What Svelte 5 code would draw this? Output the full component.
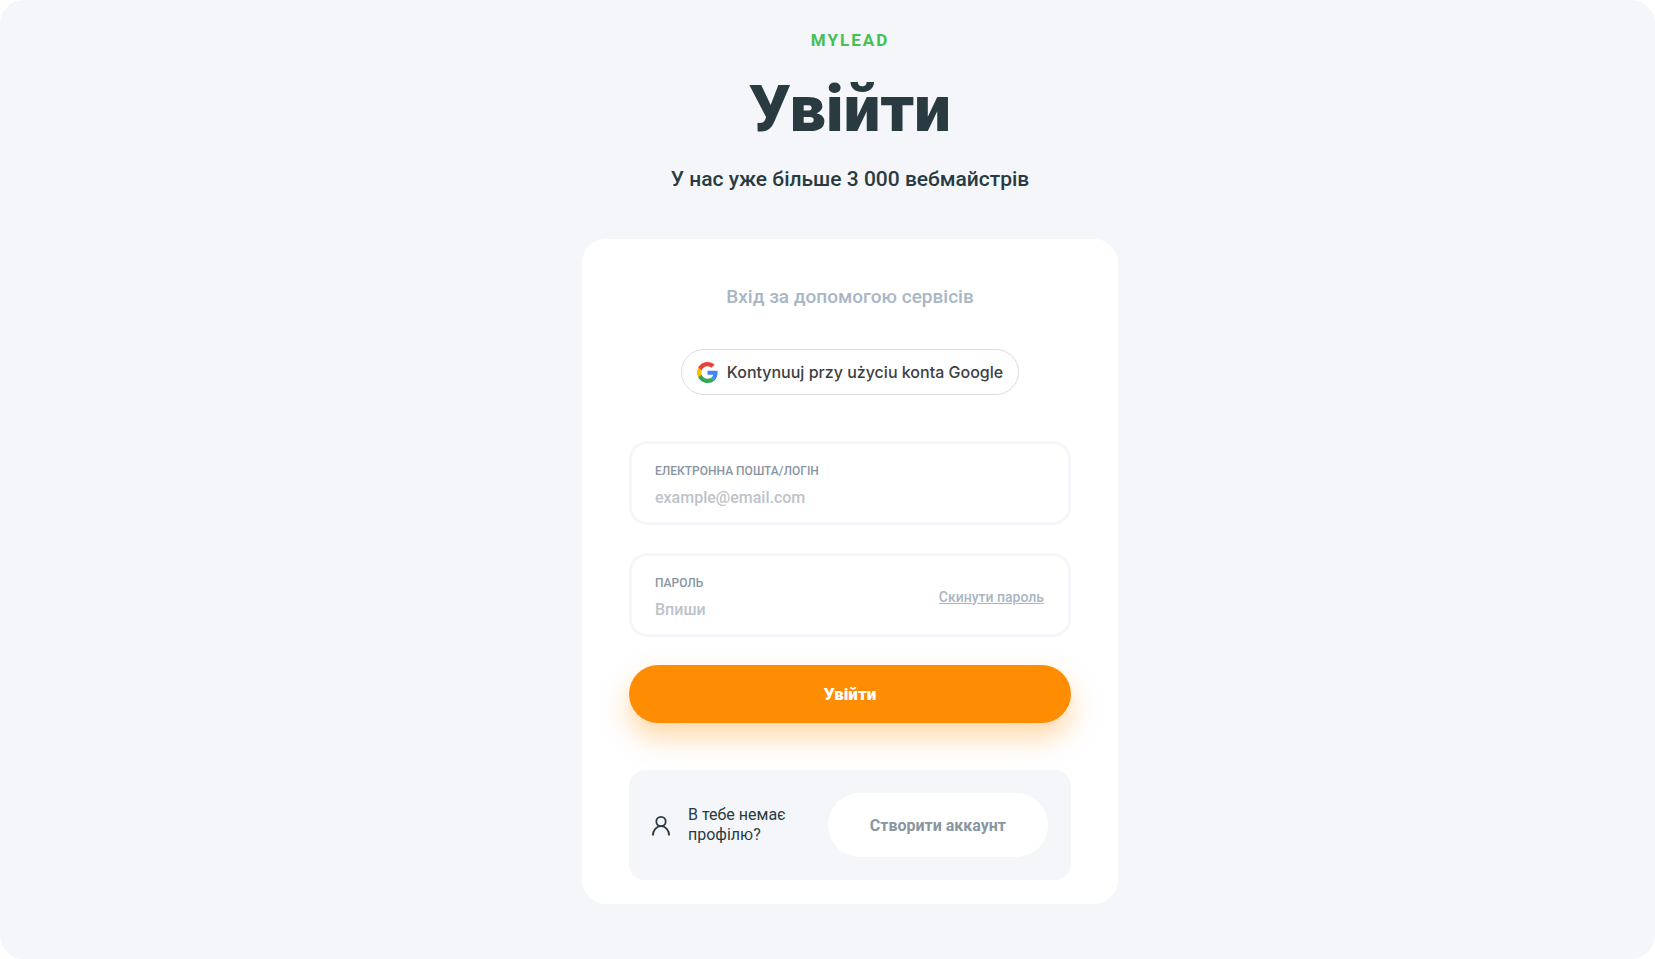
<script>
  let login = $state("");
  let password = $state("");

  function submit(event) {
    event.preventDefault();
  }
</script>

<style>
  :global(body) {
    margin: 0;
    background: #fff;
  }

  .page {
    box-sizing: border-box;
    min-height: 100vh;
    padding: 28px 0 55px 45px;
    border-radius: 24px;
    background: #f4f6fa;
    color: #293b41;
    font-family: Roboto, "Liberation Sans", sans-serif;
    display: flex;
    flex-direction: column;
    align-items: center;
  }

  header {
    text-align: center;
  }

  .brand {
    margin: 0;
    font-size: 17px;
    line-height: 24px;
    font-weight: 700;
    letter-spacing: 2px;
    color: #46bf55;
  }

  h1 {
    margin: 17px 0 16px;
    font-size: 65px;
    line-height: 80px;
    font-weight: 900;
  }

  .subtitle {
    margin: 0;
    font-size: 21px;
    line-height: 28px;
    font-weight: 500;
  }

  .card {
    box-sizing: border-box;
    width: 100%;
    max-width: 536px;
    margin-top: 46px;
    padding: 46px 47px 24px;
    border-radius: 24px;
    background: #fff;
  }

  .services {
    display: flex;
    flex-direction: column;
    align-items: center;
    gap: 40px;
    margin-bottom: 46px;
  }

  .services p {
    margin: 0;
    font-size: 19px;
    line-height: 24px;
    font-weight: 500;
    color: #a9b6c4;
  }

  button {
    cursor: pointer;
    font-family: inherit;
  }

  .google {
    display: flex;
    align-items: center;
    gap: 9px;
    height: 46px;
    padding: 0 15px;
    border: 1px solid #dadce0;
    border-radius: 23px;
    background: #fff;
    color: #3c4043;
    font-family: Inter, sans-serif;
    font-size: 16px;
    font-weight: 500;
  }

  .google svg {
    width: 21px;
    height: 21px;
  }

  form {
    display: flex;
    flex-direction: column;
    gap: 28px;
  }

  .field {
    display: flex;
    align-items: center;
    justify-content: space-between;
    gap: 16px;
    padding: 15px 24px 12px 23px;
    border: 3px solid #f4f6fa;
    border-radius: 18px;
  }

  .entry {
    flex: 1;
    min-width: 0;
    display: flex;
    flex-direction: column;
    gap: 3px;
  }

  label {
    font-size: 12px;
    line-height: 24px;
    font-weight: 500;
    text-transform: uppercase;
    color: #8995a1;
  }

  input {
    width: 100%;
    height: 24px;
    padding: 0;
    border: 0;
    outline: 0;
    background: none;
    color: #293b41;
    font: 500 16px/24px Roboto, "Liberation Sans", sans-serif;
  }

  input::placeholder {
    color: #bdc3ca;
    opacity: 1;
  }

  .reset {
    font-size: 14px;
    line-height: 20px;
    font-weight: 500;
    color: #a9b6c4;
  }

  .submit {
    height: 58px;
    border: 0;
    border-radius: 29px;
    background: #ff8d04;
    box-shadow: 0 14px 28px rgba(255, 141, 4, 0.35);
    color: #fff;
    font-size: 17px;
    font-weight: 900;
  }

  .register {
    display: flex;
    align-items: center;
    margin-top: 47px;
    padding: 23px;
    border-radius: 16px;
    background: #f4f6fa;
  }

  .register svg {
    flex: none;
    width: 20px;
    height: 22px;
  }

  .register p {
    flex: 1;
    margin: 0 32px 0 16px;
    font-size: 16px;
    line-height: 20px;
  }

  .create {
    height: 64px;
    padding: 0 42px;
    border: 0;
    border-radius: 32px;
    background: #fff;
    color: #8995a1;
    font-size: 16px;
    font-weight: 700;
  }
</style>

<main class="page">
  <header>
    <p class="brand">MYLEAD</p>
    <h1>Увійти</h1>
    <p class="subtitle">У нас уже більше 3 000 вебмайстрів</p>
  </header>

  <section class="card">
    <div class="services">
      <p>Вхід за допомогою сервісів</p>
      <button class="google" type="button">
        <svg viewBox="0 0 48 48" aria-hidden="true">
          <path fill="#EA4335" d="M24 9.5c3.54 0 6.71 1.22 9.21 3.6l6.85-6.85C35.9 2.38 30.47 0 24 0 14.62 0 6.51 5.38 2.56 13.22l7.98 6.19C12.43 13.72 17.74 9.5 24 9.5z" />
          <path fill="#4285F4" d="M46.98 24.55c0-1.57-.15-3.09-.38-4.55H24v9.02h12.94c-.58 2.96-2.26 5.48-4.78 7.18l7.73 6c4.51-4.18 7.09-10.36 7.09-17.65z" />
          <path fill="#FBBC05" d="M10.53 28.59c-.48-1.45-.76-2.99-.76-4.59s.27-3.14.76-4.59l-7.98-6.19C.92 16.46 0 20.12 0 24c0 3.88.92 7.54 2.56 10.78l7.97-6.19z" />
          <path fill="#34A853" d="M24 48c6.48 0 11.93-2.13 15.89-5.81l-7.73-6c-2.15 1.45-4.92 2.3-8.16 2.3-6.26 0-11.57-4.22-13.47-9.91l-7.98 6.19C6.51 42.62 14.62 48 24 48z" />
        </svg>
        Kontynuuj przy użyciu konta Google
      </button>
    </div>

    <form onsubmit={submit}>
      <div class="field">
        <div class="entry">
          <label for="login">Електронна пошта/логін</label>
          <input id="login" type="text" placeholder="example@email.com" bind:value={login} />
        </div>
      </div>

      <div class="field">
        <div class="entry">
          <label for="password">Пароль</label>
          <input id="password" type="password" placeholder="Впиши" bind:value={password} />
        </div>
        <a class="reset" href="#reset">Скинути пароль</a>
      </div>

      <button class="submit" type="submit">Увійти</button>
    </form>

    <div class="register">
      <svg viewBox="0 0 20 22" fill="none" stroke="#293b41" stroke-width="1.8" aria-hidden="true">
        <circle cx="9" cy="7.500" r="4.700" />
        <path d="M.9 21.500c0-5.500 3.600-9.300 8.100-9.300s8.100 3.800 8.100 9.300" />
      </svg>
      <p>В тебе немає профілю?</p>
      <button class="create" type="button">Створити аккаунт</button>
    </div>
  </section>
</main>
